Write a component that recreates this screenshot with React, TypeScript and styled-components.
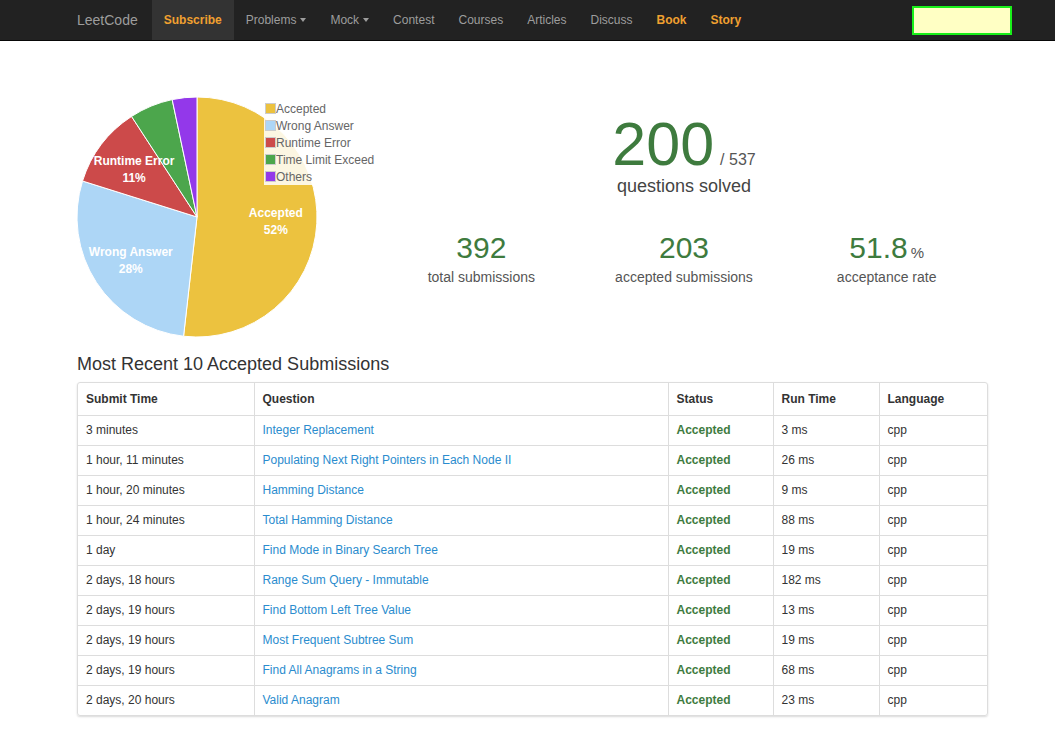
import styled, { createGlobalStyle } from 'styled-components';

const GlobalStyle = createGlobalStyle`
  html, body {
    margin: 0;
    padding: 0;
    background: #fff;
    font-family: 'Liberation Sans', Arial, sans-serif;
    color: #333;
  }
`;

const NavBar = styled.nav`
  display: flex;
  align-items: stretch;
  height: 40px;
  padding-left: 65px;
  padding-right: 43px;
  background-color: #222;
  border-bottom: 1px solid #080808;
`;

const Brand = styled.a`
  display: flex;
  align-items: center;
  padding: 0 14px 0 12px;
  font-size: 14px;
  color: #9d9d9d;
`;

const NavItem = styled.a<{ $highlight?: boolean; $active?: boolean }>`
  display: flex;
  align-items: center;
  padding: 0 12px;
  font-size: 12px;
  font-weight: ${(p) => (p.$highlight ? 700 : 400)};
  color: ${(p) => (p.$highlight ? '#f0a030' : '#9d9d9d')};
  background: ${(p) => (p.$active ? '#333' : 'transparent')};
`;

const Caret = styled.span`
  display: inline-block;
  margin-left: 4px;
  border-top: 4px solid #9d9d9d;
  border-left: 3px solid transparent;
  border-right: 3px solid transparent;
`;

const Spacer = styled.div`
  flex: 1;
`;

const SearchBox = styled.input`
  align-self: center;
  box-sizing: border-box;
  width: 100px;
  height: 29px;
  margin: 0;
  background: #ffffc4;
  border: 2px solid #19f019;
  outline: none;
`;

const Container = styled.main`
  width: 911px;
  margin-left: 77px;
`;

const TopSection = styled.section`
  display: flex;
  margin-top: 51px;
`;

const ChartColumn = styled.div`
  width: 303px;
  height: 250px;
`;

const StatsColumn = styled.div`
  flex: 1;
  display: flex;
  flex-direction: column;
  align-items: center;
  padding-top: 22px;
`;

const SolvedRow = styled.div`
  display: flex;
  align-items: baseline;
  height: 60px;
  line-height: 60px;
`;

const BigNumber = styled.span`
  font-size: 61px;
  color: #3e7b3e;
`;

const Total = styled.span`
  margin-left: 6px;
  font-size: 16px;
  color: #555;
`;

const SolvedLabel = styled.div`
  margin-top: 1px;
  font-size: 18px;
  line-height: 22px;
  color: #444;
`;

const StatsRow = styled.div`
  display: grid;
  grid-template-columns: repeat(3, 1fr);
  width: 100%;
  margin-top: 33px;
`;

const Stat = styled.div`
  display: flex;
  flex-direction: column;
  align-items: center;
`;

const StatNumber = styled.div`
  height: 36px;
  font-size: 30px;
  line-height: 36px;
  color: #3e7b3e;
`;

const Percent = styled.span`
  margin-left: 3px;
  font-size: 15px;
  line-height: 0;
  color: #555;
`;

const StatLabel = styled.div`
  margin-top: 1px;
  font-size: 14px;
  line-height: 20px;
  color: #555;
`;

const Heading = styled.h3`
  margin: 12px 0 8px;
  font-size: 18px;
  font-weight: 400;
  line-height: 20px;
  color: #333;
`;

const TablePanel = styled.div`
  border: 1px solid #ddd;
  border-radius: 3px;
  box-shadow: 0 1px 2px rgba(0, 0, 0, 0.15);
  overflow: hidden;
  margin-bottom: 20px;
`;

const Table = styled.table`
  width: 100%;
  border-collapse: collapse;
  table-layout: fixed;
  font-size: 12px;
`;

const Th = styled.th<{ $w: number }>`
  box-sizing: border-box;
  width: ${(p) => p.$w}px;
  height: 32px;
  padding: 0 8px;
  text-align: left;
  font-weight: 700;
  color: #333;
  border-left: 1px solid #ddd;
  &:first-child {
    border-left: none;
  }
`;

const Td = styled.td`
  height: 29px;
  padding: 0 8px;
  color: #333;
  border-top: 1px solid #ddd;
  border-left: 1px solid #ddd;
  &:first-child {
    border-left: none;
  }
`;

const QuestionLink = styled.a`
  color: #2a8cce;
  text-decoration: none;
`;

const StatusText = styled.span`
  font-weight: 700;
  color: #3e7b3e;
`;

const slices = [
  { name: 'Accepted', count: 203, color: '#ecc23f', label: '52%' },
  { name: 'Wrong Answer', count: 110, color: '#add6f6', label: '28%' },
  { name: 'Runtime Error', count: 43, color: '#cc4a4a', label: '11%' },
  { name: 'Time Limit Exceed', count: 23, color: '#4ca64c', label: '' },
  { name: 'Others', count: 13, color: '#9338ea', label: '' },
];

const submissions = [
  ['3 minutes', 'Integer Replacement', '3 ms'],
  ['1 hour, 11 minutes', 'Populating Next Right Pointers in Each Node II', '26 ms'],
  ['1 hour, 20 minutes', 'Hamming Distance', '9 ms'],
  ['1 hour, 24 minutes', 'Total Hamming Distance', '88 ms'],
  ['1 day', 'Find Mode in Binary Search Tree', '19 ms'],
  ['2 days, 18 hours', 'Range Sum Query - Immutable', '182 ms'],
  ['2 days, 19 hours', 'Find Bottom Left Tree Value', '13 ms'],
  ['2 days, 19 hours', 'Most Frequent Subtree Sum', '19 ms'],
  ['2 days, 19 hours', 'Find All Anagrams in a String', '68 ms'],
  ['2 days, 20 hours', 'Valid Anagram', '23 ms'],
];

function PieChart() {
  const cx = 120;
  const cy = 125;
  const r = 120;
  const total = slices.reduce((s, x) => s + x.count, 0);
  let angle = -Math.PI / 2;

  const parts = slices.map((s) => {
    const sweep = (s.count / total) * Math.PI * 2;
    const a0 = angle;
    const a1 = angle + sweep;
    angle = a1;
    const x0 = cx + r * Math.cos(a0);
    const y0 = cy + r * Math.sin(a0);
    const x1 = cx + r * Math.cos(a1);
    const y1 = cy + r * Math.sin(a1);
    const large = sweep > Math.PI ? 1 : 0;
    const mid = (a0 + a1) / 2;
    return {
      ...s,
      d: `M${cx},${cy} L${x0},${y0} A${r},${r} 0 ${large} 1 ${x1},${y1} Z`,
      lx: cx + 79 * Math.cos(mid),
      ly: cy + 79 * Math.sin(mid),
    };
  });

  return (
    <svg width="303" height="250" viewBox="0 0 303 250">
      {parts.map((p) => (
        <path key={p.name} d={p.d} fill={p.color} stroke="#fff" strokeWidth="1" />
      ))}
      {parts
        .filter((p) => p.label)
        .map((p) => (
          <text
            key={p.name}
            x={p.lx}
            y={p.ly}
            fill="#fff"
            fontSize="12"
            fontWeight="700"
            textAnchor="middle"
            fontFamily="'Liberation Sans', Arial, sans-serif"
          >
            <tspan x={p.lx} dy="-4">{p.name}</tspan>
            <tspan x={p.lx} dy="17">{p.label}</tspan>
          </text>
        ))}
      <rect x="187" y="8" width="113" height="85" fill="#fff" fillOpacity="0.85" />
      {slices.map((s, i) => (
        <g key={s.name}>
          <rect
            x="188.5"
            y={11.5 + i * 17}
            width="10"
            height="10"
            fill={s.color}
            stroke="#ccc"
            strokeWidth="1"
          />
          <text
            x="199"
            y={21 + i * 17}
            fill="#666"
            fontSize="12"
            fontFamily="'Liberation Sans', Arial, sans-serif"
          >
            {s.name}
          </text>
        </g>
      ))}
    </svg>
  );
}

export default function App() {
  return (
    <>
      <GlobalStyle />
      <NavBar>
        <Brand>LeetCode</Brand>
        <NavItem $highlight $active>Subscribe</NavItem>
        <NavItem>
          Problems
          <Caret />
        </NavItem>
        <NavItem>
          Mock
          <Caret />
        </NavItem>
        <NavItem>Contest</NavItem>
        <NavItem>Courses</NavItem>
        <NavItem>Articles</NavItem>
        <NavItem>Discuss</NavItem>
        <NavItem $highlight>Book</NavItem>
        <NavItem $highlight>Story</NavItem>
        <Spacer />
        <SearchBox />
      </NavBar>
      <Container>
        <TopSection>
          <ChartColumn>
            <PieChart />
          </ChartColumn>
          <StatsColumn>
            <SolvedRow>
              <BigNumber>200</BigNumber>
              <Total>/ 537</Total>
            </SolvedRow>
            <SolvedLabel>questions solved</SolvedLabel>
            <StatsRow>
              <Stat>
                <StatNumber>392</StatNumber>
                <StatLabel>total submissions</StatLabel>
              </Stat>
              <Stat>
                <StatNumber>203</StatNumber>
                <StatLabel>accepted submissions</StatLabel>
              </Stat>
              <Stat>
                <StatNumber>
                  51.8<Percent>%</Percent>
                </StatNumber>
                <StatLabel>acceptance rate</StatLabel>
              </Stat>
            </StatsRow>
          </StatsColumn>
        </TopSection>
        <Heading>Most Recent 10 Accepted Submissions</Heading>
        <TablePanel>
          <Table>
            <thead>
              <tr>
                <Th $w={176}>Submit Time</Th>
                <Th $w={414}>Question</Th>
                <Th $w={105}>Status</Th>
                <Th $w={106}>Run Time</Th>
                <Th $w={110}>Language</Th>
              </tr>
            </thead>
            <tbody>
              {submissions.map(([time, question, runtime]) => (
                <tr key={question}>
                  <Td>{time}</Td>
                  <Td>
                    <QuestionLink>{question}</QuestionLink>
                  </Td>
                  <Td>
                    <StatusText>Accepted</StatusText>
                  </Td>
                  <Td>{runtime}</Td>
                  <Td>cpp</Td>
                </tr>
              ))}
            </tbody>
          </Table>
        </TablePanel>
      </Container>
    </>
  );
}
